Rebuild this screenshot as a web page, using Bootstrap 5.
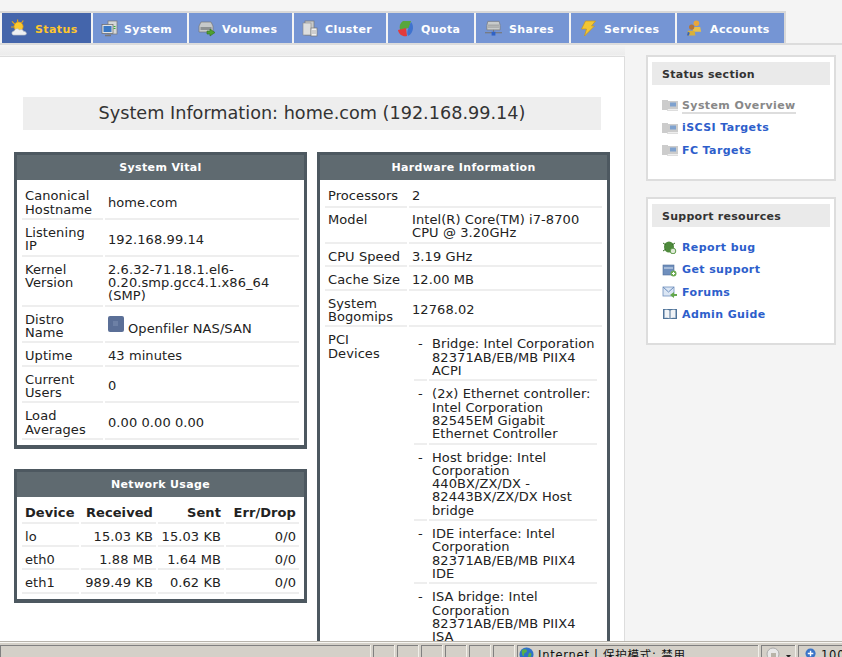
<!DOCTYPE html>
<html lang="en"><head><meta charset="utf-8"><title>Openfiler</title>
<link rel="stylesheet" href="https://cdn.jsdelivr.net/npm/bootstrap@5.3.0/dist/css/bootstrap.min.css">
<style>
html,body{height:100%;overflow:hidden}
body{background:#f4f4f4;font-family:"DejaVu Sans",Verdana,sans-serif;font-size:13px;line-height:13.33px;color:#222}
.shell{height:657px}
.topstrip{padding:11px 0 0 0;height:45px;border-bottom:2px solid #dcdcdc;flex:none}
.tabrow{border-top:2px solid #d8d8d8;border-right:2px solid #d8d8d8;width:786px;height:32px;gap:2px;padding-left:2px;flex-wrap:nowrap;box-sizing:border-box}
.tabrow .nav-link{height:30px;padding:3px 0 0;background:#7595d4;color:#fff;font-weight:700;font-size:11px;letter-spacing:.4px;display:flex;align-items:center;border-radius:0}
.tabrow .nav-link.on{background:#4465ab;color:#ffc62d}
.tabrow svg{flex:none;margin:-3px 7px 0 9px}
.tabrow svg.tight{margin:-3px 6px 0 8px}
.w1{width:89px}.w2{width:94px}.w3{width:103px}.w4{width:92px}.w5{width:86px}.w6{width:93px}.w7{width:104px}.w8{width:107px}
.stage{flex:1 1 0;min-height:0;overflow:hidden;background:linear-gradient(#f4f4f4,#ececec 85%,#f4f4f4 100%) 0 0/625px 11px no-repeat,#f4f4f4;padding-top:11px}
.sheet{width:625px;flex:none;background:#fff;border-top:1px solid #ddd;border-right:1px solid #ddd;height:700px;padding:40px 0 0 14px}
.pagehead{margin:0 0 22px 9px;width:578px;height:33px;background:#eee;color:#333;font-size:17.65px;line-height:33px;text-align:center;font-weight:400}
.pane{width:293px;border:3px solid #4d5860;border-bottom-width:4px;background:#fff}
.pane-title{height:25px;background:#5f6a70;color:#fff;font-size:11px;letter-spacing:.35px;font-weight:700;line-height:25px;text-align:center;padding:0;border:0}
.grid-table{border-collapse:separate;border-spacing:2px;margin:3.3px 3px 3px;width:281px;table-layout:fixed;letter-spacing:.08px}
.grid-table td,.grid-table th{padding:4px 3px 2px;border-bottom:2px solid #eee;vertical-align:middle}
.grid-table td:first-child{vertical-align:top}
.grid-table .r{text-align:right}
.grid-table th{font-weight:700;white-space:nowrap}
.inner{border-collapse:separate;border-spacing:2px;width:100%;table-layout:fixed}
.grid-table td.cellfull{padding:2px 3px 0;border-bottom:0}
.grid-table .inner td:last-child{padding-right:0}
.grid-table tr.hwfirst td{padding-bottom:3.33px}
.grid-table tr.hwmodel td{padding-top:2.7px;padding-bottom:2.6px}
.leftcol{width:303px;flex:none}
.gap-stack{margin-bottom:20px}
.c81{width:81px}.c82{width:82px}.c13{width:13px}.c57{width:57px}.c75{width:75px}.c66{width:66px}
.distro-t{margin-top:5.33px}
.distro-i{margin-top:-1px}
.rail{width:190px;margin-left:21px;flex:none;margin-top:-1px}
.railbox{border:2px solid #ddd;background:#fff;padding:5px 4px 0;margin-bottom:16px}
.h1box{height:126px}.h2box{height:148px}
.railhead{height:23px;background:#eaeaea;color:#333;font-weight:700;font-size:11px;letter-spacing:.28px;line-height:25px;padding:0 0 0 10px;border:0}
.raillist{padding:0 0 0 10px;margin:9.5px 0 0;list-style:none}
.raillist li{display:flex;align-items:center;height:22.4px;font-size:11px;font-weight:700;letter-spacing:.4px;gap:4px}
.raillist a{color:#2d5ecb;text-decoration:none}
.raillist a.cur{color:#888;border-bottom:2px solid #ddd;line-height:12px;margin-top:2px}
.statusline{height:16px;flex:none;background:#d4d0c8;border-top:1px solid #b8b4ac;box-shadow:inset 0 1px 0 #f6f5f1;padding-top:3px;gap:3px;overflow:hidden;font-size:12px;color:#111}
.sbox{border-top:1px solid #808080;border-left:1px solid #808080;height:20px;flex:none;box-shadow:1px 0 0 #f1efe9}
.s370{width:370px}.s21{width:21px}.s241{width:241px}.s34{width:34px}.s60{width:60px}
.sbox .txt{font-family:"DejaVu Sans","Noto Sans CJK SC",sans-serif;line-height:14px;font-size:11.5px;white-space:nowrap;letter-spacing:.75px;padding-top:2px}
.globe{margin:1px 4px 0 1px;flex:none}
.zoomic{margin:2px 4px 0 6px;flex:none}
.secic{margin:1px 2px 0 4px}
</style></head>
<body>
<div class="shell d-flex flex-column">
  <div class="topstrip">
    <ul class="nav tabrow">
      <li class="nav-item"><a class="nav-link on w1" href="#"><svg width="17" height="18" viewBox="0 0 18 18"><g stroke="#e8a612" stroke-width="1.2"><path d="M7 0v3M1 2l3 3M13 1l-2 3M0 8h3"/></g><circle cx="8" cy="7.500" r="4.800" fill="#fbc92f" stroke="#e39a10" stroke-width=".8"/><path d="M3 16.500c-2.500 0-3-4 .5-4.300 .5-2.500 4-3.200 5.500-1 1.500-1.200 4-.5 4.200 1.300 3.300-.2 4.500 4 1 4z" fill="#eef0f2" stroke="#b4bac2" stroke-width=".7"/></svg>Status</a></li>
      <li class="nav-item"><a class="nav-link w2" href="#"><svg class="tight" width="17" height="17" viewBox="0 0 17 17"><rect x="7" y="1" width="9" height="13" fill="#d5d8d8" stroke="#777" stroke-width=".7"/><rect x="12.500" y="6" width="2" height="1" fill="#3b3"/><rect x="12.500" y="8" width="2" height="1" fill="#3b3"/><rect x="1" y="4.500" width="11" height="9" fill="#dfe3e6" stroke="#666" stroke-width=".7"/><rect x="2.500" y="6" width="8" height="6" fill="#3a78c4"/><path d="M4 15.500h6" stroke="#777" stroke-width="1.500"/></svg>System</a></li>
      <li class="nav-item"><a class="nav-link w3" href="#"><svg width="17" height="17" viewBox="0 0 17 17"><path d="M1 6l2-4h10l2 4v6H1z" fill="#c6c9c9" stroke="#777" stroke-width=".7"/><rect x="2.500" y="7" width="11" height="3" fill="#8d9192"/><path d="M9 11h3V9l5 3.500-5 3.500v-2H9z" fill="#4fa030" stroke="#2f6f20" stroke-width=".6"/></svg>Volumes</a></li>
      <li class="nav-item"><a class="nav-link w4" href="#"><svg class="tight" width="17" height="17" viewBox="0 0 17 17"><rect x="3" y="1" width="9" height="14" fill="#c8cbcb" stroke="#777" stroke-width=".7"/><rect x="1" y="3" width="8" height="12" fill="#dcdede" stroke="#888" stroke-width=".6"/><rect x="9" y="8" width="6" height="8" fill="#f0f1f1" stroke="#777" stroke-width=".7"/><path d="M11 10v4M13 10v4" stroke="#999" stroke-width=".8"/></svg>Cluster</a></li>
      <li class="nav-item"><a class="nav-link w5" href="#"><svg width="17" height="17" viewBox="0 0 17 17"><path d="M6 1h8l-2 7-9 2C2 6 3 3 6 1z" fill="#57a63d"/><path d="M1 10l8-2 1 8c-4 1-8-1-9-6z" fill="#e33b3b"/><path d="M11 9l3-7c3 3 3 11-3 14-1-2-1-4 0-7z" fill="#3f73cf"/></svg>Quota</a></li>
      <li class="nav-item"><a class="nav-link w6" href="#"><svg width="17" height="18" viewBox="0 0 18 18"><path d="M3 2h12l1 4v5H2V6z" fill="#c8cbcb" stroke="#777" stroke-width=".7"/><path d="M3 6h12M3 8h12" stroke="#888" stroke-width=".8"/><path d="M0 14h18" stroke="#777" stroke-width="1.200"/><path d="M9 11v3" stroke="#777"/><rect x="7" y="13" width="4" height="4" fill="#2f62c6"/></svg>Shares</a></li>
      <li class="nav-item"><a class="nav-link w7" href="#"><svg width="17" height="17" viewBox="0 0 16 17"><path d="M5 1h10l-4 5h3L4 16l2-7H1z" fill="#f2c633" stroke="#c8951a" stroke-width=".7"/></svg>Services</a></li>
      <li class="nav-item"><a class="nav-link w8" href="#"><svg width="17" height="18" viewBox="0 0 18 18"><circle cx="11" cy="4" r="3" fill="#e9a63a"/><path d="M7 13l1-5h7l1 5z" fill="#e9c04a"/><circle cx="6" cy="8" r="2.800" fill="#b5763a"/><path d="M1 17l1-5h7l1 5z" fill="#d9b03a"/><path d="M1 17l1-4 2 1-1 3z" fill="#2f62c6"/></svg>Accounts</a></li>
    </ul>
  </div>
  <div class="stage d-flex">
    <div class="sheet">
      <h1 class="pagehead">System Information: home.com (192.168.99.14)</h1>
      <div class="d-flex align-items-start">
        <div class="leftcol">
          <div class="card pane gap-stack rounded-0">
            <div class="card-header pane-title rounded-0">System Vital</div>
            <table class="grid-table">
              <colgroup><col class="c81"><col></colgroup>
              <tr><td>Canonical Hostname</td><td>home.com</td></tr>
              <tr><td>Listening<br>IP</td><td>192.168.99.14</td></tr>
              <tr><td>Kernel Version</td><td>2.6.32-71.18.1.el6-0.20.smp.gcc4.1.x86_64 (SMP)</td></tr>
              <tr><td>Distro Name</td><td><span class="d-inline-flex align-items-start gap-1"><svg class="distro-i" width="16" height="16" viewBox="0 0 16 16"><rect width="16" height="16" rx="2" fill="#5b6f97"/><path d="M5 5h5v5H5z" fill="#6d80a5"/></svg><span class="distro-t">Openfiler NAS/SAN</span></span></td></tr>
              <tr><td>Uptime</td><td>43 minutes</td></tr>
              <tr><td>Current Users</td><td>0</td></tr>
              <tr><td>Load Averages</td><td>0.00 0.00 0.00</td></tr>
            </table>
          </div>
          <div class="card pane rounded-0">
            <div class="card-header pane-title rounded-0">Network Usage</div>
            <table class="grid-table">
              <colgroup><col class="c57"><col class="c75"><col class="c66"><col></colgroup>
              <tr><th>Device</th><th class="r">Received</th><th class="r">Sent</th><th class="r">Err/Drop</th></tr>
              <tr><td>lo</td><td class="r">15.03 KB</td><td class="r">15.03 KB</td><td class="r">0/0</td></tr>
              <tr><td>eth0</td><td class="r">1.88 MB</td><td class="r">1.64 MB</td><td class="r">0/0</td></tr>
              <tr><td>eth1</td><td class="r">989.49 KB</td><td class="r">0.62 KB</td><td class="r">0/0</td></tr>
            </table>
          </div>
        </div>
        <div class="card pane rounded-0">
          <div class="card-header pane-title rounded-0">Hardware Information</div>
          <table class="grid-table">
            <colgroup><col class="c82"><col></colgroup>
            <tr class="hwfirst"><td>Processors</td><td>2</td></tr>
            <tr class="hwmodel"><td>Model</td><td>Intel(R) Core(TM) i7-8700 CPU @ 3.20GHz</td></tr>
            <tr><td>CPU Speed</td><td>3.19 GHz</td></tr>
            <tr><td>Cache Size</td><td>12.00 MB</td></tr>
            <tr><td>System Bogomips</td><td>12768.02</td></tr>
            <tr><td>PCI Devices</td><td class="cellfull">
              <table class="inner">
                <colgroup><col class="c13"><col></colgroup>
                <tr><td class="text-center">-</td><td>Bridge: Intel Corporation 82371AB/EB/MB PIIX4 ACPI</td></tr>
                <tr><td class="text-center">-</td><td>(2x) Ethernet controller: Intel Corporation 82545EM Gigabit Ethernet Controller</td></tr>
                <tr><td class="text-center">-</td><td>Host bridge: Intel Corporation 440BX/ZX/DX - 82443BX/ZX/DX Host bridge</td></tr>
                <tr><td class="text-center">-</td><td>IDE interface: Intel Corporation 82371AB/EB/MB PIIX4 IDE</td></tr>
                <tr><td class="text-center">-</td><td>ISA bridge: Intel Corporation 82371AB/EB/MB PIIX4 ISA</td></tr>
              </table>
            </td></tr>
          </table>
        </div>
      </div>
    </div>
    <div class="rail">
      <div class="card railbox h1box rounded-0">
        <div class="card-header railhead rounded-0">Status section</div>
        <ul class="raillist">
          <li><svg width="16" height="11" viewBox="0 0 16 11"><rect width="6" height="10" fill="#ccc"/><rect x="6" y="1" width="10" height="8" fill="#ccc"/><rect x="8" y="2.500" width="6" height="4" fill="#7fa2cf"/><rect x="5" y="9.500" width="11" height="1.500" fill="#ddd"/></svg><a class="cur" href="#">System Overview</a></li>
          <li><svg width="16" height="11" viewBox="0 0 16 11"><rect width="6" height="10" fill="#ccc"/><rect x="6" y="1" width="10" height="8" fill="#ccc"/><rect x="8" y="2.500" width="6" height="4" fill="#7fa2cf"/><rect x="5" y="9.500" width="11" height="1.500" fill="#ddd"/></svg><a href="#">iSCSI Targets</a></li>
          <li><svg width="16" height="11" viewBox="0 0 16 11"><rect width="6" height="10" fill="#ccc"/><rect x="6" y="1" width="10" height="8" fill="#ccc"/><rect x="8" y="2.500" width="6" height="4" fill="#7fa2cf"/><rect x="5" y="9.500" width="11" height="1.500" fill="#ddd"/></svg><a href="#">FC Targets</a></li>
        </ul>
      </div>
      <div class="card railbox h2box rounded-0">
        <div class="card-header railhead rounded-0">Support resources</div>
        <ul class="raillist">
          <li><svg width="16" height="13" viewBox="0 0 16 13"><ellipse cx="7" cy="6" rx="5" ry="5.500" fill="#4e8a3c"/><path d="M1 2l3 2M1 10l3-2M13 2l-3 2" stroke="#3a6e2b"/><circle cx="11" cy="10" r="2.800" fill="#dfe9d8" stroke="#5d9a48"/></svg><a href="#">Report bug</a></li>
          <li><svg width="16" height="13" viewBox="0 0 16 13"><rect x="1" y="1" width="11" height="10" fill="#6f8fbd" stroke="#52709c" stroke-width=".6"/><path d="M2 4h9" stroke="#dde6f2"/><circle cx="11.500" cy="9.500" r="3" fill="#6cab54"/><path d="M10 9.500h3M11.500 8v3" stroke="#fff"/></svg><a href="#">Get support</a></li>
          <li><svg width="16" height="13" viewBox="0 0 16 13"><rect x="1" y="1" width="11" height="9" fill="#dbe6f4" stroke="#6f8fbd" stroke-width=".8"/><path d="M1 1l5.500 5L12 1" fill="none" stroke="#6f8fbd"/><path d="M8 9l4-3v2h3v2h-3v2z" fill="#64a84c"/></svg><a href="#">Forums</a></li>
          <li><svg width="16" height="13" viewBox="0 0 16 13"><path d="M1 1h14v10H1z" fill="#4f7399"/><path d="M2.500 2c2-.5 4-.5 5 .5v8c-1-1-3-1-5-.5zM13.500 2c-2-.5-4-.5-5 .5v8c1-1 3-1 5-.5z" fill="#f0f3f6"/></svg><a href="#">Admin Guide</a></li>
        </ul>
      </div>
    </div>
  </div>
  <div class="statusline d-flex">
    <div class="sbox s370"></div>
    <div class="sbox s21"></div><div class="sbox s21"></div><div class="sbox s21"></div><div class="sbox s21"></div><div class="sbox s21"></div><div class="sbox s21"></div>
    <div class="sbox s241 d-flex"><svg class="globe" width="15" height="15" viewBox="0 0 15 15"><circle cx="7.500" cy="7.500" r="7" fill="#2f72c9"/><path d="M3 3c2-1 5-1 5 1s-3 1-3 4-3 0-2-5zM10 6c2-1 3 1 2 3s-3 2-3 0z" fill="#58b04a"/></svg><span class="txt">Internet | 保护模式: 禁用</span></div>
    <div class="sbox s34 d-flex"><svg class="secic" width="26" height="14" viewBox="0 0 26 14"><circle cx="7" cy="7" r="6" fill="#e8e8e8" stroke="#aaa"/><rect x="5" y="6" width="5" height="5" fill="#b8b4a8"/><path d="M20 8h5l-2.500 3z" fill="#222"/></svg></div>
    <div class="sbox s60 d-flex"><svg class="zoomic" width="12" height="12" viewBox="0 0 13 13"><circle cx="6" cy="6" r="5.500" fill="#3a74c8"/><path d="M3 6h6M6 3v6" stroke="#fff" stroke-width="1.500"/></svg><span class="txt">100%</span></div>
  </div>
</div>
<script src="https://cdn.jsdelivr.net/npm/bootstrap@5.3.0/dist/js/bootstrap.bundle.min.js"></script>
</body></html>
